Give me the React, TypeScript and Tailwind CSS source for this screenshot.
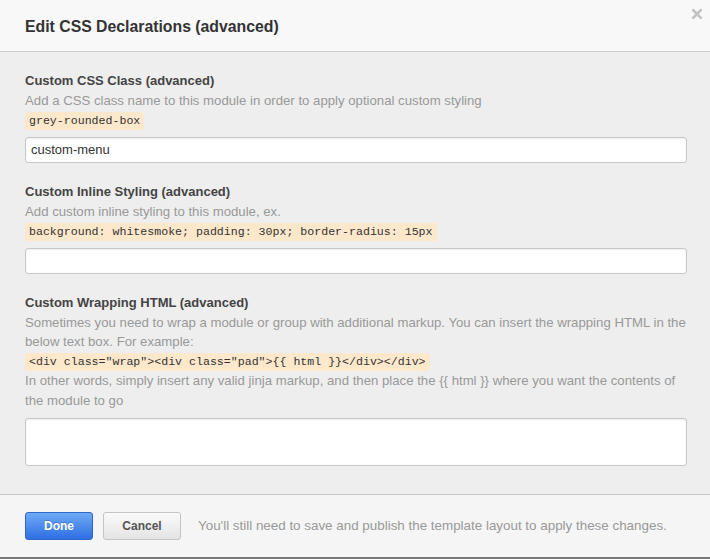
import React from 'react';

const sans = { fontFamily: '"Liberation Sans", Arial, sans-serif' };

function Code({ children }: { children: React.ReactNode }) {
  return (
    <div className="flex h-[19.5px] items-center pt-[2px]">
      <span className="rounded-[3px] bg-[#fde8cc] px-[4px] font-['Liberation_Mono',monospace] text-[11.6px] leading-[18px] text-[#333]">
        {children}
      </span>
    </div>
  );
}

const inputCls =
  'rounded-[3px] border border-[#c8c8c8] bg-white shadow-[inset_0_1px_2px_rgba(0,0,0,0.08)]';

export default function App() {
  return (
    <div style={sans} className="flex h-[559px] w-[710px] flex-col overflow-hidden border-b-2 border-[#7a7a7a] bg-[#eeeeee] text-[13px] text-[#444]">
      <div className="relative flex h-[52px] shrink-0 items-center border-b border-[#cccccc] bg-[#f8f8f8] px-[25px] pt-[2px]">
        <h1 className="text-[15.8px] font-bold text-[#333]">Edit CSS Declarations (advanced)</h1>
        <svg className="absolute right-[8px] top-[9px]" width="10" height="10" viewBox="0 0 10 10">
          <path d="M1 1L9 9M9 1L1 9" stroke="#c2c2c2" strokeWidth="2.6" strokeLinecap="square" />
        </svg>
      </div>

      <div className="flex flex-1 flex-col pl-[25px] pr-[23px] pt-[19px] leading-[19.5px]">
        <div className="font-bold">Custom CSS Class (advanced)</div>
        <div className="text-[13.2px] text-[#999]">Add a CSS class name to this module in order to apply optional custom styling</div>
        <Code>grey-rounded-box</Code>
        <div className={`mt-[7.5px] flex h-[26px] items-center px-[5px] text-[13px] text-[#333] ${inputCls}`}>
          custom-menu
        </div>

        <div className="mt-[19px] font-bold">Custom Inline Styling (advanced)</div>
        <div className="text-[13.2px] text-[#999]">Add custom inline styling to this module, ex.</div>
        <Code>background: whitesmoke; padding: 30px; border-radius: 15px</Code>
        <div className={`mt-[7.5px] h-[26px] ${inputCls}`} />

        <div className="mt-[19px] font-bold">Custom Wrapping HTML (advanced)</div>
        <div className="text-[13.2px] text-[#999]">
          Sometimes you need to wrap a module or group with additional markup. You can insert the wrapping HTML in the below text box. For example:
        </div>
        <Code>{'<div class="wrap"><div class="pad">{{ html }}</div></div>'}</Code>
        <div className="text-[13.2px] text-[#999]">
          In other words, simply insert any valid jinja markup, and then place the {'{{ html }}'} where you want the contents of the module to go
        </div>
        <textarea className={`mt-[8px] block h-[48px] w-full resize-none outline-none ${inputCls}`} />
      </div>

      <div className="flex h-[63px] shrink-0 items-center gap-[10px] border-t border-[#c8c8c8] bg-[#f5f5f5] px-[25px]">
        <button className="h-[28px] w-[68px] rounded-[3px] border border-[#2f66cc] bg-gradient-to-b from-[#6eaaf6] to-[#2e6ee2] text-[12px] font-bold text-white [text-shadow:0_-1px_0_rgba(0,0,0,0.2)]">
          Done
        </button>
        <button className="h-[28px] w-[78px] rounded-[3px] border border-[#c4c4c4] bg-gradient-to-b from-[#fafafa] to-[#e4e4e4] text-[12px] font-bold text-[#555]">
          Cancel
        </button>
        <span className="ml-[7px] text-[13.4px] text-[#999]">
          You'll still need to save and publish the template layout to apply these changes.
        </span>
      </div>
    </div>
  );
}
